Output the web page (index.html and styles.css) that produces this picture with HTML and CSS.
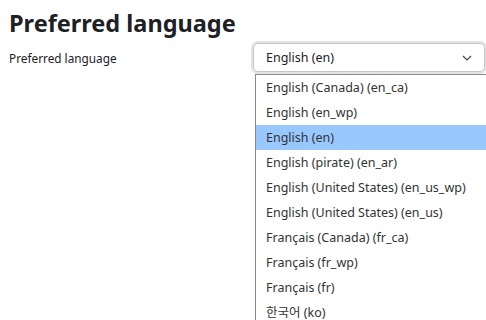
FILE: index.html
```html
<!DOCTYPE html>
<html>
<head>
<meta charset="utf-8">
<link rel="stylesheet" href="styles.css">
</head>
<body>
<h2 class="title">Preferred language</h2>
<div class="row">
  <label class="label">Preferred language</label>
  <div class="select-wrap">
    <div class="select">
      <span>English (en)</span>
      <svg class="chev" width="10" height="6" viewBox="0 0 10 6"><path d="M1 1l4 4 4-4" fill="none" stroke="#444" stroke-width="1.2"/></svg>
    </div>
    <ul class="list">
      <li>English (Canada) (en_ca)</li>
      <li>English (en_wp)</li>
      <li class="sel">English (en)</li>
      <li>English (pirate) (en_ar)</li>
      <li>English (United States) (en_us_wp)</li>
      <li>English (United States) (en_us)</li>
      <li>Français (Canada) (fr_ca)</li>
      <li>Français (fr_wp)</li>
      <li>Français (fr)</li>
      <li>한국어 (ko)</li>
    </ul>
  </div>
</div>
</body>
</html>
```
FILE: styles.css
```css
html { overflow: hidden; height: 320px; }
html, body { margin: 0; padding: 0; background: #fff; }
body { font-family: "Noto Sans", "Noto Sans CJK KR", sans-serif; color: #1d2125; padding: 0 9px; height: 320px; box-sizing: border-box; }
.title { margin: 7px 0 0; font-size: 23.5px; font-weight: 700; line-height: 32px; }
.row { display: flex; align-items: flex-start; margin-top: 3px; }
.label { width: 244px; font-size: 11.8px; line-height: 18px; margin-top: 7px; }
.select-wrap { flex: 1; margin-right: -8px; padding-top: 1px; }
.select { height: 29px; box-sizing: border-box; border: 1px solid #c4c7ca; border-radius: 5px; box-shadow: 0 0 0 2px #e2e3e5; display: flex; align-items: center; justify-content: space-between; padding: 0 12px 0 12px; font-size: 12.5px; color: #1d2125; }
.chev { margin-top: 1px; }
.list { margin: 2px -20px 0 2px; padding: 0; list-style: none; border-left: 1px solid #8a8a8a; border-top: 1px solid #8a8a8a; background: #fff; font-size: 12.5px; color: #333; }
.list li { height: 25px; line-height: 25px; padding-left: 10px; white-space: nowrap; }
.list li.sel { background: #99c8ff; }
```
